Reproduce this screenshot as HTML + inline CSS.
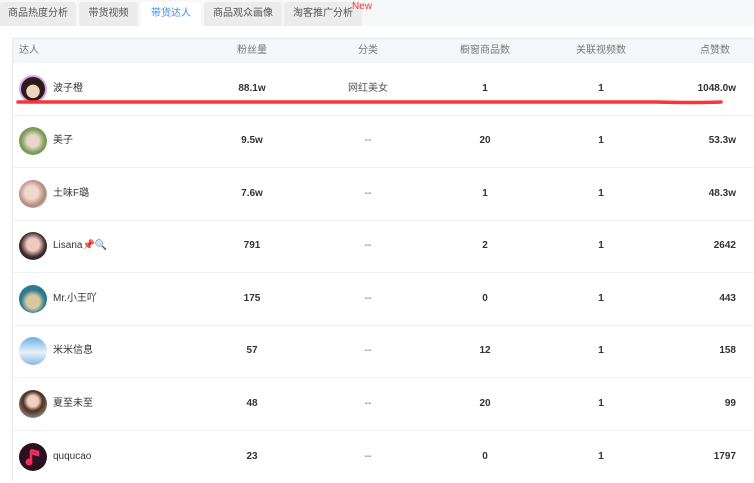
<!DOCTYPE html>
<html><head><meta charset="utf-8"><style>
*{margin:0;padding:0;box-sizing:border-box}
body{width:754px;height:481px;overflow:hidden;background:#fff;font-family:"Liberation Sans","Noto Sans CJK SC",sans-serif;font-size:10px;color:#333;position:relative}
.tabbar{position:absolute;left:0;top:0;width:754px;height:26px;background:#f7f8fa}
.tab{position:absolute;top:2px;height:24px;background:#ececec;border-radius:3px 3px 0 0;color:#555;font-size:10px;line-height:24px;text-align:center}
.tab.on{background:#fff;color:#3a8ee6}
.new{position:absolute;left:352px;top:2px;color:#f33;font-size:10px;line-height:1}
.tbl{position:absolute;left:12px;top:38px;width:742px;height:443px;border-left:1px solid #e6e8ee;border-top:1px solid #e6e8ee}
.hd{height:24px;background:#f5f6fa;color:#777;position:relative}
.row{height:52.5px;border-bottom:1px solid #f0f1f5;position:relative;font-weight:bold;color:#333}
.c,.r,.nm,.hl{line-height:1}
.c{position:absolute;top:50%;transform:translate(-50%,-50%);white-space:nowrap}
.r{position:absolute;top:50%;transform:translateY(-50%);right:18px;white-space:nowrap}
.nm{position:absolute;left:40px;top:50%;transform:translateY(-50%);font-weight:normal;color:#333;white-space:nowrap}
.av{position:absolute;left:6px;top:50%;margin-top:-14px;width:28px;height:28px;border-radius:50%;overflow:hidden}
.cat{font-weight:normal;color:#555}
</style></head><body>
<div class="tabbar">
<div class="tab" style="left:0;width:76px">商品热度分析</div>
<div class="tab" style="left:79px;width:59px">带货视频</div>
<div class="tab on" style="left:141px;width:60px">带货达人</div>
<div class="tab" style="left:204px;width:78px">商品观众画像</div>
<div class="tab" style="left:284px;width:78px">淘客推广分析</div>
<div class="new">New</div>
</div>
<div class="tbl">
<div class="hd"><span class="hl" style="position:absolute;left:6px;top:50%;transform:translateY(-50%)">达人</span>
<span class="c" style="left:239px">粉丝量</span><span class="c" style="left:355px">分类</span><span class="c" style="left:472px">橱窗商品数</span><span class="c" style="left:588px">关联视频数</span><span class="c" style="left:702px">点赞数</span></div>

<div class="row"><div class="av" style="background:radial-gradient(circle at 50% 60%,#f2d3c0 35%,#2a1c18 37%);border:2px solid #d9a6f0"></div><span class="nm">波子橙</span>
<span class="c" style="left:239px">88.1w</span><span class="c cat" style="left:355px">网红美女</span><span class="c" style="left:472px">1</span><span class="c" style="left:588px">1</span><span class="r">1048.0w</span>
<svg style="position:absolute;left:3px;top:36px" width="720" height="6"><path d="M2 3 L640 3 Q680 4 705 3" stroke="#f33" stroke-width="3.5" fill="none" stroke-linecap="round"/></svg></div>

<div class="row"><div class="av" style="background:radial-gradient(circle at 50% 50%,#e8d7c8 30%,#7a9a5a 60%)"></div><span class="nm">美子</span>
<span class="c" style="left:239px">9.5w</span><span class="c cat" style="left:355px">--</span><span class="c" style="left:472px">20</span><span class="c" style="left:588px">1</span><span class="r">53.3w</span></div>

<div class="row"><div class="av" style="background:radial-gradient(circle at 45% 45%,#f0d8cc 30%,#b08a7a 60%,#e8e0dc)"></div><span class="nm">土味F璐</span>
<span class="c" style="left:239px">7.6w</span><span class="c cat" style="left:355px">--</span><span class="c" style="left:472px">1</span><span class="c" style="left:588px">1</span><span class="r">48.3w</span></div>

<div class="row"><div class="av" style="background:radial-gradient(circle at 50% 45%,#f0c8c0 30%,#3a2a2a 60%)"></div><span class="nm">Lisana📌🔍</span>
<span class="c" style="left:239px">791</span><span class="c cat" style="left:355px">--</span><span class="c" style="left:472px">2</span><span class="c" style="left:588px">1</span><span class="r">2642</span></div>

<div class="row"><div class="av" style="background:radial-gradient(circle at 50% 60%,#d8c8a0 30%,#2a7a90 55%)"></div><span class="nm">Mr.小王吖</span>
<span class="c" style="left:239px">175</span><span class="c cat" style="left:355px">--</span><span class="c" style="left:472px">0</span><span class="c" style="left:588px">1</span><span class="r">443</span></div>

<div class="row"><div class="av" style="background:linear-gradient(#6aaee8,#e8f2fa 55%,#8ab8e0)"></div><span class="nm">米米信息</span>
<span class="c" style="left:239px">57</span><span class="c cat" style="left:355px">--</span><span class="c" style="left:472px">12</span><span class="c" style="left:588px">1</span><span class="r">158</span></div>

<div class="row"><div class="av" style="background:radial-gradient(circle at 50% 40%,#f0d0c0 25%,#4a3020 45%,#c8c0b8)"></div><span class="nm">夏至未至</span>
<span class="c" style="left:239px">48</span><span class="c cat" style="left:355px">--</span><span class="c" style="left:472px">20</span><span class="c" style="left:588px">1</span><span class="r">99</span></div>

<div class="row" style="border:none"><div class="av" style="background:#2a1020"><svg width="28" height="28"><path d="M12 7 L12 18 M12 7 L19 9 L19 12 L12 10" stroke="#f0305a" stroke-width="2.5" fill="none"/><circle cx="10" cy="19" r="3.5" fill="#f0305a"/></svg></div><span class="nm">ququcao</span>
<span class="c" style="left:239px">23</span><span class="c cat" style="left:355px">--</span><span class="c" style="left:472px">0</span><span class="c" style="left:588px">1</span><span class="r">1797</span></div>
</div>
</body></html>
